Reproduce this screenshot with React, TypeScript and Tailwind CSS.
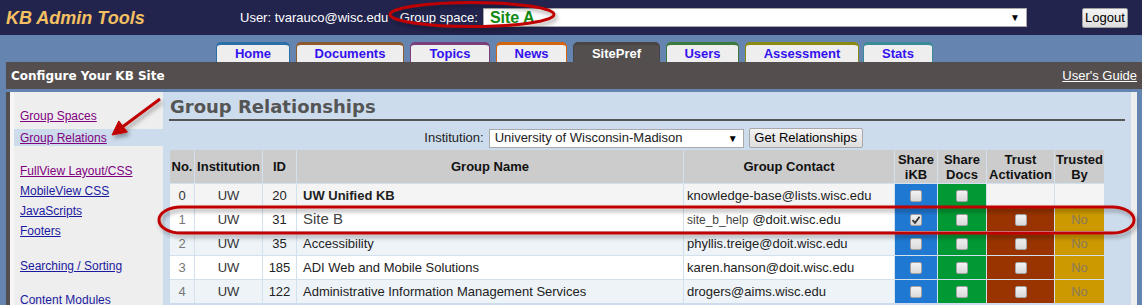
import React from 'react';

const tabs = [
  { label: 'Home', w: 'w-[74px]', color: 'border-[#2b6fa8]', active: false },
  { label: 'Documents', w: 'w-[108px]', color: 'border-[#8c5a2c]', active: false },
  { label: 'Topics', w: 'w-[80px]', color: 'border-[#7a3e7c]', active: false },
  { label: 'News', w: 'w-[71px]', color: 'border-[#d4650f]', active: false },
  { label: 'SitePref', w: 'w-[87px]', color: 'border-[#4a4444]', active: true },
  { label: 'Users', w: 'w-[73px]', color: 'border-[#3e7a3e]', active: false },
  { label: 'Assessment', w: 'w-[114px]', color: 'border-[#8a8a12]', active: false },
  { label: 'Stats', w: 'w-[70px]', color: 'border-[#3a8a98]', active: false },
];

const sideLinks = [
  { label: 'Group Spaces', cls: 'mt-[14px] h-[20px] text-[#800080]' },
  { label: 'Group Relations', cls: 'mt-[3px] h-[17px] bg-[#cddcec] text-[#800080]' },
  { label: 'FullView Layout/CSS', cls: 'mt-[15px] h-[20px] text-[#800080]' },
  { label: 'MobileView CSS', cls: 'h-[20px] text-[#1a1aa0]' },
  { label: 'JavaScripts', cls: 'h-[20px] text-[#1a1aa0]' },
  { label: 'Footers', cls: 'h-[20px] text-[#1a1aa0]' },
  { label: 'Searching / Sorting', cls: 'mt-[15px] h-[20px] text-[#1a1aa0]' },
  { label: 'Content Modules', cls: 'mt-[14px] h-[20px] text-[#1a1aa0]' },
];

type Row = {
  no: string;
  id: string;
  name: string;
  contact: string;
  bg: string;
  own?: boolean;
  ikb?: boolean;
};

const rows: Row[] = [
  { no: '0', id: '20', name: 'UW Unified KB', contact: 'knowledge-base@lists.wisc.edu', bg: 'bg-[#f4f4f4]', own: true },
  { no: '1', id: '31', name: 'Site B', contact: '@doit.wisc.edu', bg: 'bg-white', ikb: true },
  { no: '2', id: '35', name: 'Accessibility', contact: 'phyllis.treige@doit.wisc.edu', bg: 'bg-[#eef3f8]' },
  { no: '3', id: '185', name: 'ADI Web and Mobile Solutions', contact: 'karen.hanson@doit.wisc.edu', bg: 'bg-white' },
  { no: '4', id: '122', name: 'Administrative Information Management Services', contact: 'drogers@aims.wisc.edu', bg: 'bg-[#eef3f8]' },
];

function Check({ on }: { on?: boolean }) {
  return (
    <span className="w-[12px] h-[12px] rounded-[2px] border border-[#a3a3a3] bg-gradient-to-b from-[#f3f3f3] to-[#d9d9d9] flex items-center justify-center">
      {on && (
        <svg width="10" height="10" viewBox="0 0 10 10">
          <path d="M1.5 5.2 L4 7.8 L8.6 1.8" fill="none" stroke="#333" strokeWidth="1.8" />
        </svg>
      )}
    </span>
  );
}

function Th({ children }: { children: React.ReactNode }) {
  return (
    <div className="bg-[#cccccc] h-[33px] flex items-center justify-center text-center font-bold text-[13px] leading-[15px] text-[#111]">
      {children}
    </div>
  );
}

export default function App() {
  return (
    <div className="relative w-[1142px] h-[305px] overflow-hidden bg-[#6585b0] font-['Liberation_Sans',Arial,sans-serif] text-[13px] text-[#222]">
      {/* top bar */}
      <div className="h-[35px] bg-[#22244e] flex items-center">
        <div className="w-[240px] pl-[6px] pt-[2px] text-[18px] font-bold italic text-[#f4c061]">KB Admin Tools</div>
        <span className="text-white text-[13px] pt-[1px]">User: tvarauco@wisc.edu - Group space:</span>
        <div className="ml-[5px] w-[544px] h-[19px] bg-white border border-[#a9a9a9] flex items-center pl-[6px] pr-[6px]">
          <span className="text-[16px] font-bold text-[#128a12] leading-[17px]">Site A</span>
          <span className="ml-auto text-[10px] text-black">▼</span>
        </div>
        <button className="ml-[55px] w-[46px] h-[20px] bg-gradient-to-b from-[#f4f4f4] to-[#dedede] border border-[#a0a0a0] rounded-[2px] text-[13px] text-black leading-[18px]">
          Logout
        </button>
      </div>

      {/* tabs */}
      <div className="h-[27px] flex items-end pl-[216px] gap-[6px]">
        {tabs.map(t => (
          <div
            key={t.label}
            className={`${t.w} ${t.color} ${t.label === 'Stats' ? '-ml-[2px]' : ''} h-[20px] rounded-t-[5px] border-t-[3px] border-x text-center font-bold text-[13px] leading-[16px] pt-[1px] ${
              t.active ? 'bg-[#544f4f] text-white' : 'bg-[#eeeeee] text-[#3311ee]'
            }`}
          >
            {t.label}
          </div>
        ))}
      </div>

      {/* dark bar */}
      <div className="ml-[6px] h-[27px] bg-[#544e4e] flex items-center justify-between pl-[5px] pr-[5px]">
        <span className="font-['DejaVu_Sans',Verdana,sans-serif] font-bold text-[12px] text-white">Configure Your KB Site</span>
        <span className="text-white underline text-[13px]">User's Guide</span>
      </div>

      {/* body */}
      <div className="ml-[6px] w-[1131px] h-[216px] border-t-[3px] border-[#6585b0] flex">
        <div className="w-[4px] bg-[#544e4e]" />
        <div className="w-[153px] bg-[#eeeeee] border-l-4 border-[#f6f6f6] flex flex-col">
          {sideLinks.map(l => (
            <div key={l.label} className={`${l.cls} shrink-0 flex items-center pl-[6px] text-[12px] underline`}>
              {l.label}
            </div>
          ))}
        </div>
        <div className="flex-1 bg-[#cddcec] pl-[6px]">
          <div className="w-[956px] pt-[5px] pb-[2px] border-b-2 border-[#555] font-['DejaVu_Sans',Verdana,sans-serif] font-bold text-[18px] leading-[20px] text-[#555] pl-[1px]">
            Group Relationships
          </div>
          <div className="ml-[1px] w-[934px] mt-[7px] h-[20px] flex items-center justify-center pl-[13px]">
            <span className="mr-[5px]">Institution:</span>
            <div className="w-[255px] h-[19px] bg-white border border-[#a9a9a9] flex items-center px-[5px]">
              <span>University of Wisconsin-Madison</span>
              <span className="ml-auto text-[10px] text-black">▼</span>
            </div>
            <button className="ml-[5px] w-[114px] h-[20px] bg-gradient-to-b from-[#f4f4f4] to-[#dedede] border border-[#a8a8a8] rounded-[2px] text-[13px] text-black leading-[18px]">
              Get Relationships
            </button>
          </div>

          <div className="ml-[1px] mt-[2px] w-[934px] grid grid-cols-[24px_67px_33px_386px_210px_42px_48px_67px_49px] gap-px bg-[#d3e1ef]">
            <Th>No.</Th>
            <Th>Institution</Th>
            <Th>ID</Th>
            <Th>Group Name</Th>
            <Th>Group Contact</Th>
            <Th>Share<br />iKB</Th>
            <Th>Share<br />Docs</Th>
            <Th>Trust<br />Activation</Th>
            <Th>Trusted<br />By</Th>
            {rows.map(r => (
              <React.Fragment key={r.no}>
                <div className={`${r.bg} h-[23px] flex items-center justify-center ${r.own ? 'text-[#333]' : 'text-[#777]'}`}>{r.no}</div>
                <div className={`${r.bg} h-[23px] flex items-center justify-center text-[#333]`}>UW</div>
                <div className={`${r.bg} h-[23px] flex items-center justify-center text-[#222]`}>{r.id}</div>
                <div className={`${r.bg} h-[23px] flex items-center pl-[6px] whitespace-nowrap ${r.own ? 'font-bold' : ''} ${r.no === '1' ? 'text-[15px] text-[#444]' : ''}`}>
                  {r.name}
                </div>
                <div className={`${r.bg} h-[23px] flex items-center pl-[3px] whitespace-nowrap`}>
                  {r.no === '1' && <span className="text-[12px] text-[#444] mr-[4px]">site_b_help</span>}
                  {r.contact}
                </div>
                <div className="bg-[#1f78d1] h-[23px] flex items-center justify-center">
                  <Check on={r.ikb} />
                </div>
                <div className="bg-[#009933] h-[23px] flex items-center justify-center">
                  <Check />
                </div>
                {r.own ? (
                  <>
                    <div className={`${r.bg} h-[23px]`} />
                    <div className={`${r.bg} h-[23px]`} />
                  </>
                ) : (
                  <>
                    <div className="bg-[#993300] h-[23px] flex items-center justify-center">
                      <Check />
                    </div>
                    <div className="bg-[#cc9900] h-[23px] flex items-center justify-center text-[#8a7a5c]">No</div>
                  </>
                )}
              </React.Fragment>
            ))}
          </div>
        </div>
        <div className="w-[6px] bg-[#eeeeee]" />
      </div>

      {/* red annotations */}
      <svg className="absolute inset-0 pointer-events-none" width="1142" height="305">
        <defs>
          <filter id="sh" x="-10%" y="-50%" width="120%" height="200%">
            <feDropShadow dx="2" dy="3" stdDeviation="2" floodColor="#000" floodOpacity="0.35" />
          </filter>
        </defs>
        <g filter="url(#sh)" fill="none" stroke="#c00000" strokeWidth="3">
          <ellipse cx="472" cy="14.5" rx="82" ry="12" />
          <rect x="159" y="207" width="975" height="26" rx="22" ry="13" />
          <line x1="160" y1="99" x2="123" y2="126.5" />
          <polygon points="112,135 127.4,132.1 118.8,120.9" fill="#c00000" strokeWidth="1" />
        </g>
      </svg>
    </div>
  );
}
